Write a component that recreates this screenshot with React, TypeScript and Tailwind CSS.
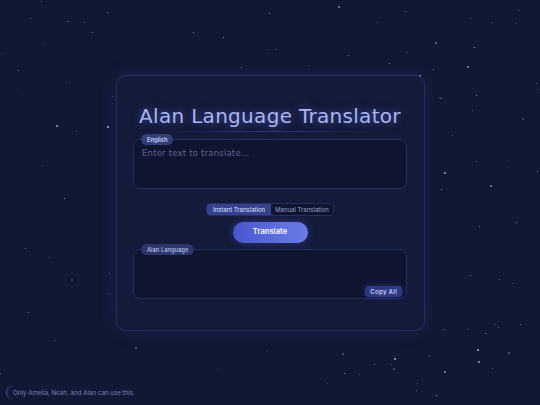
import React from "react";

function makeStars(count: number) {
  let seed = 7;
  const rnd = () => {
    seed = (seed * 16807) % 2147483647;
    return (seed - 1) / 2147483646;
  };
  return Array.from({ length: count }, () => ({
    x: rnd() * 540,
    y: rnd() * 405,
    s: rnd() > 0.8 ? 2 : 1,
    o: 0.25 + rnd() * 0.6,
  }));
}

const stars = makeStars(140);

export default function App() {
  return (
    <div className="relative flex h-[405px] w-full items-center justify-center overflow-hidden bg-[#111833] font-['DejaVu_Sans',sans-serif]">
      {stars.map((st, i) => (
        <span
          key={i}
          className="absolute rounded-full bg-[#c8cff5]"
          style={{ left: st.x, top: st.y, width: st.s, height: st.s, opacity: st.o }}
        />
      ))}

      <div className="relative flex h-[256px] w-[309px] flex-col items-center rounded-[10px] border border-[#262f5e] bg-[#131a3a] px-[16px] pt-[26px] shadow-[0_0_18px_rgba(79,91,200,0.18)]">
        <h1 className="whitespace-nowrap text-[20px] leading-[28px] tracking-[0.3px] text-[#a9b6f5] [text-shadow:0_0_8px_rgba(129,140,248,0.55)]">
          Alan Language Translator
        </h1>
        <div className="mt-px h-px w-[230px] bg-gradient-to-r from-transparent via-[#4b57a8]/50 to-transparent" />

        <div className="relative mt-[7px] h-[50px] w-[274px] rounded-[7px] border border-[#262f5e] bg-[#0f1430]">
          <span className="absolute -top-[6px] left-[7px] rounded-full bg-[#343e78] px-[6px] py-[1px] font-['Inter',sans-serif] text-[5.8px] font-semibold leading-[9px] text-[#c9cff2]">
            English
          </span>
          <div className="px-[8px] pt-[7px] text-[8.5px] tracking-[0.2px] text-[#5f6588]">
            Enter text to translate...
          </div>
        </div>

        <div className="mt-[14px] flex h-[13px] overflow-hidden rounded-[4px] border border-[#262f5e] font-['Inter',sans-serif] text-[6px] leading-[11px]">
          <div className="flex w-[64px] items-center justify-center bg-[#35408f] text-[#dfe3ff]">
            Instant Translation
          </div>
          <div className="flex w-[62px] items-center justify-center bg-[#0f1430] text-[#9aa0c8]">
            Manual Translation
          </div>
        </div>

        <button className="mt-[6px] h-[21px] w-[75px] rounded-full bg-gradient-to-r from-[#4a56cf] to-[#6a7ce8] font-['Inter',sans-serif] text-[7.5px] font-bold text-[#eef0ff] shadow-[0_0_10px_rgba(99,112,230,0.35)]">
          Translate
        </button>

        <div className="relative mt-[6px] h-[50px] w-[274px] rounded-[7px] border border-[#262f5e] bg-[#0f1430]">
          <span className="absolute -top-[6px] left-[7px] rounded-full bg-[#2c3568] px-[6px] py-[1px] font-['Inter',sans-serif] text-[5.8px] font-medium leading-[9px] text-[#b9c0ea]">
            Alan Language
          </span>
          <button className="absolute bottom-[1px] right-[4px] h-[11px] rounded-[4px] bg-[#2e3983] px-[5px] font-['Inter',sans-serif] text-[6px] font-semibold tracking-[0.3px] text-[#c9cff2] shadow-[0_0_6px_rgba(79,91,200,0.4)]">
            Copy All
          </button>
        </div>
      </div>

      <div className="absolute bottom-[6px] left-[6px] rounded-l-full border-l border-[#4a5ab8] bg-[#121936] py-[2px] pl-[6px] pr-[4px] font-['Inter',sans-serif] text-[6.2px] leading-[9px] text-[#7c82a8]">
        Only Amelia, Noah, and Alan can use this
      </div>
    </div>
  );
}
